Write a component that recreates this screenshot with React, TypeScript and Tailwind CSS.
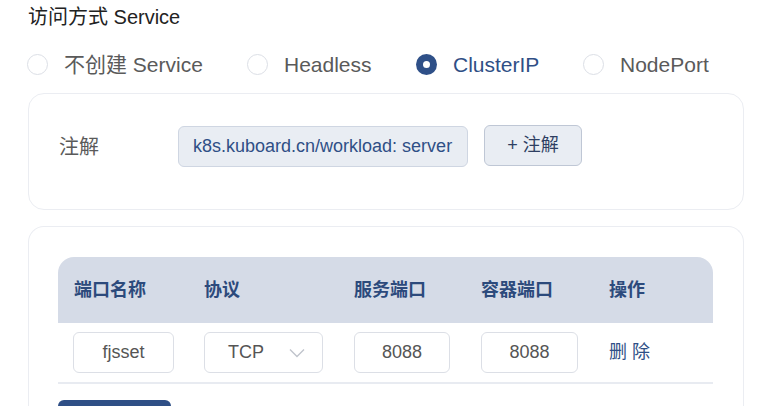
const font = "font-['Liberation_Sans','Noto_Sans_CJK_SC',sans-serif]";

const options = [
  { label: "不创建 Service", checked: false },
  { label: "Headless", checked: false },
  { label: "ClusterIP", checked: true },
  { label: "NodePort", checked: false },
];

const columns = ["端口名称", "协议", "服务端口", "容器端口", "操作"];

function Radio({ label, checked }: { label: string; checked: boolean }) {
  return (
    <label className="flex items-center gap-[16px]">
      {checked ? (
        <span className="flex h-[21px] w-[21px] items-center justify-center rounded-full bg-[#2f5088]">
          <span className="h-[7px] w-[7px] rounded-full bg-white" />
        </span>
      ) : (
        <span className="h-[21px] w-[21px] rounded-full border border-[#dcdfe6] bg-white" />
      )}
      <span className={checked ? "text-[#2f4f86]" : "text-[#5a5a5a]"}>{label}</span>
    </label>
  );
}

function Cell({ value, width }: { value: string; width: string }) {
  return (
    <div
      className={`flex h-[41px] ${width} items-center justify-center rounded-md border border-[#dcdfe6] bg-white text-[18px] text-[#555]`}
    >
      {value}
    </div>
  );
}

export default function App() {
  return (
    <div className={`${font} min-h-[406px] bg-white pl-[27px] pr-[24px] pt-[3px]`}>
      <h2 className="pl-px text-[20px] leading-[28px] text-[#222]">访问方式 Service</h2>

      <div className="mt-[23px] flex h-[21px] items-center text-[21px]">
        <div className="w-[220px]">
          <Radio {...options[0]} />
        </div>
        <div className="w-[169px]">
          <Radio {...options[1]} />
        </div>
        <div className="w-[167px]">
          <Radio {...options[2]} />
        </div>
        <Radio {...options[3]} />
      </div>

      <section className="ml-px mt-[18px] h-[117px] rounded-2xl border border-[#ebedf2] px-[30px] pt-[32px]">
        <div className="flex items-center">
          <span className="w-[119px] text-[20px] text-[#5a5a5a]">注解</span>
          <span className="flex h-[41px] w-[290px] items-center whitespace-nowrap rounded-md border border-[#cfd6e2] bg-[#e9edf3] px-[14px] text-[18px] text-[#2f4f86]">
            k8s.kuboard.cn/workload: server
          </span>
          <button className="ml-4 h-[41px] w-[98px] -translate-y-px rounded-md border border-[#bfc7d5] bg-[#e9edf3] text-[18px] text-[#2e3f62]">
            + 注解
          </button>
        </div>
      </section>

      <section className="ml-px mt-[16px] rounded-t-2xl border border-b-0 border-[#ebedf2] px-[29px] pt-[30px]">
        <div className="w-[655px]">
          <div className="grid h-[66px] grid-cols-[130px_150px_127px_128px_120px] items-center rounded-t-2xl bg-[#d5dbe7] text-[18px] font-bold text-[#2c4a7c]">
            {columns.map((c) => (
              <div key={c} className="pl-4">
                {c}
              </div>
            ))}
          </div>
          <div className="grid h-[61px] grid-cols-[130px_150px_127px_128px_120px] items-center border-b-2 border-[#e8ebf1]">
            <div className="pl-[15px]">
              <Cell value="fjsset" width="w-[101px]" />
            </div>
            <div className="pl-4">
              <div className="flex h-[41px] w-[119px] items-center justify-between rounded-md border border-[#dcdfe6] bg-white pl-[23px] pr-[17px] text-[18px] text-[#555]">
                TCP
                <svg width="16" height="10" viewBox="0 0 16 10" fill="none">
                  <path d="M1 1.5l7 7 7-7" stroke="#c0c4cc" strokeWidth="1.4" />
                </svg>
              </div>
            </div>
            <div className="pl-4">
              <Cell value="8088" width="w-[96px]" />
            </div>
            <div className="pl-4">
              <Cell value="8088" width="w-[97px]" />
            </div>
            <div className="pl-4 text-[18px] text-[#2f4f86]">删 除</div>
          </div>
          <button className="mt-[16px] block h-[36px] w-[113px] rounded-md bg-[#2f4f86]" />
        </div>
      </section>
    </div>
  );
}
